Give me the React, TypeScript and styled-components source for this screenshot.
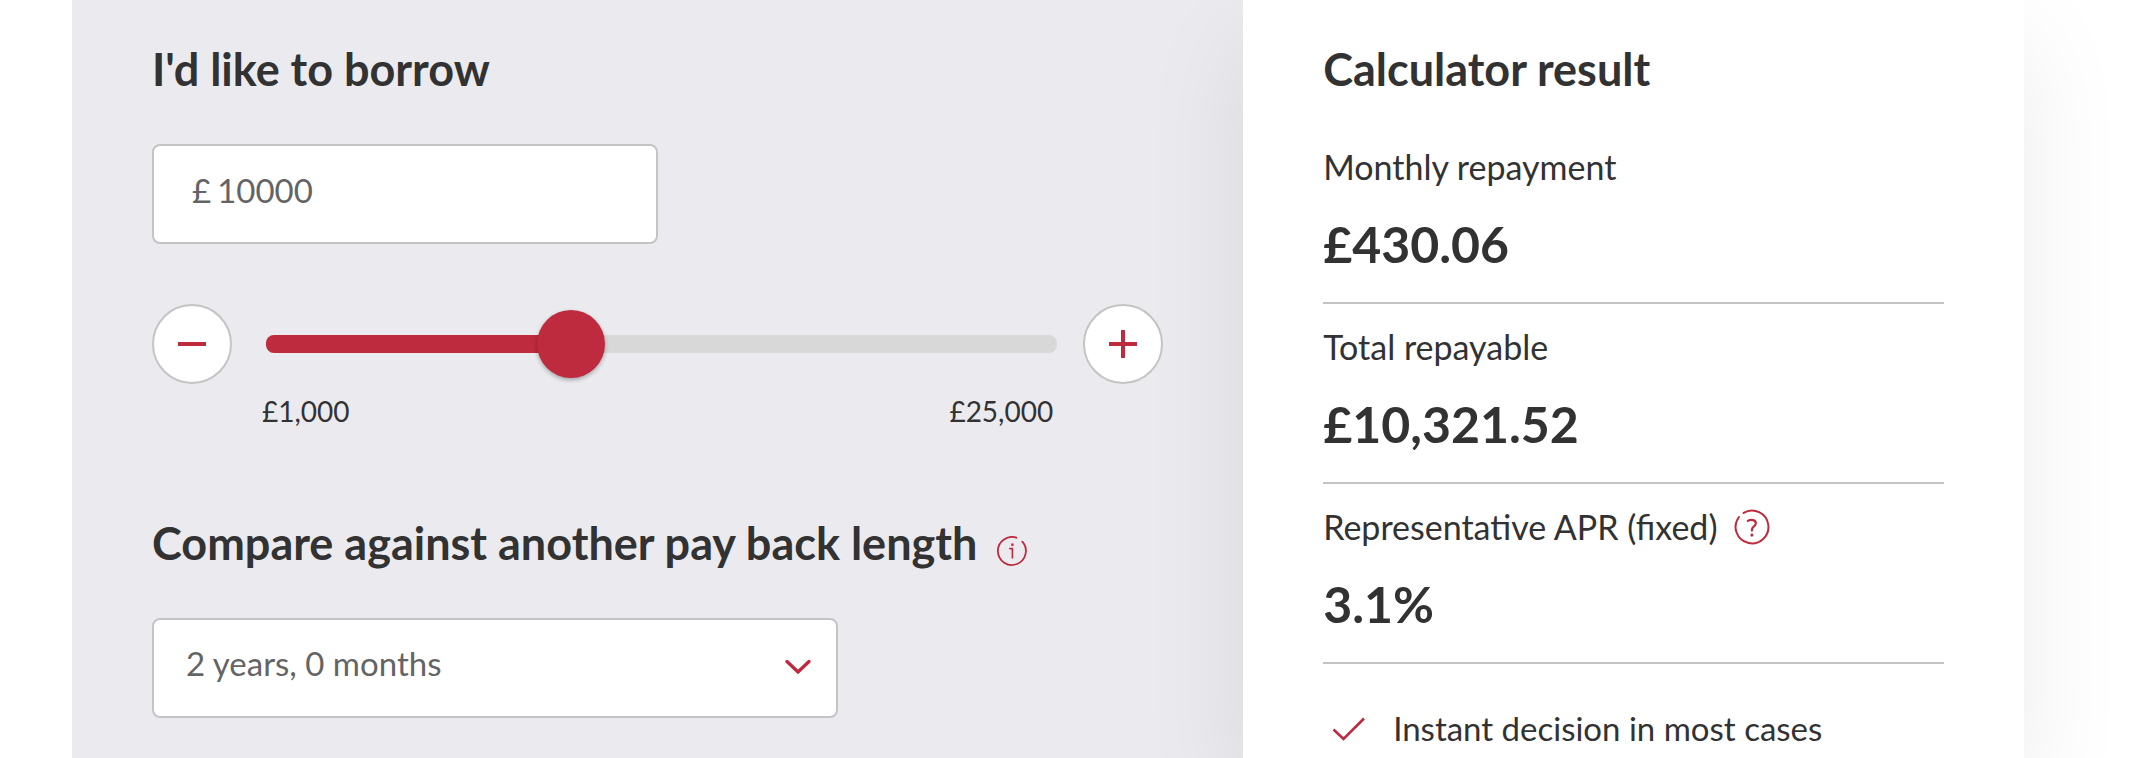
import React, { useState } from 'react';
import styled, { createGlobalStyle, css } from 'styled-components';

const RED = '#be2b3e';
const TEXT = '#323233';
const LINE = '#c4c4c5';

const MIN = 1000;
const MAX = 25000;
const STEP = 500;

const GlobalStyle = createGlobalStyle`
  *, *::before, *::after { box-sizing: border-box; }
  body {
    margin: 0;
    background: #fff;
    color: ${TEXT};
    font-family: Lato, "Liberation Sans", sans-serif;
    overflow-x: hidden;
  }
`;

const Page = styled.main`
  display: grid;
  grid-template-columns: minmax(0, 3fr) minmax(0, 2fr);
  min-height: 100vh;
  padding: 0 124px 0 72px;
  overflow: hidden;
`;

const Form = styled.form`
  padding: 40px 80px;
  background: #ebebef;
`;

const Result = styled.section`
  position: relative;
  padding: 40px 80px 8px;
  background: #fff;
  box-shadow: 0 40px 100px rgba(0, 0, 0, 0.08);
`;

const headingText = css`
  margin: 0;
  font-size: 45px;
  font-weight: 700;
  line-height: 58px;
`;

const Label = styled.label`
  ${headingText}
  display: block;
`;

const Title = styled.h2`
  ${headingText}
`;

const HeadingRow = styled.div`
  display: flex;
  align-items: flex-end;
  gap: 20px;
  margin-top: 84px;
`;

const IconButton = styled.button<{ $size: number; $lift?: number }>`
  display: flex;
  flex: none;
  width: ${(p) => p.$size}px;
  height: ${(p) => p.$size}px;
  margin: 0 0 ${(p) => p.$lift ?? 0}px;
  padding: 0;
  border: 0;
  background: none;
  cursor: pointer;

  svg {
    width: 100%;
    height: 100%;
  }
`;

const fieldBox = css`
  height: 100px;
  border: 2px solid ${LINE};
  border-radius: 8px;
  background: #fff;
`;

const fieldText = css`
  color: #646465;
  font-family: inherit;
  font-size: 33px;
  line-height: 40px;
`;

const AmountBox = styled.div`
  ${fieldBox}
  ${fieldText}
  display: flex;
  align-items: center;
  gap: 6px;
  max-width: 506px;
  margin-top: 46px;
  padding: 0 36px 8px 38px;
`;

const AmountInput = styled.input`
  ${fieldText}
  flex: 1;
  min-width: 0;
  padding: 0;
  border: 0;
  outline: 0;
  background: none;
`;

const SliderRow = styled.div`
  display: grid;
  grid-template-columns: 80px minmax(0, 1fr) 80px;
  align-items: center;
  column-gap: 26px;
  margin-top: 60px;
`;

const RoundButton = styled.button`
  display: flex;
  align-items: center;
  justify-content: center;
  width: 80px;
  height: 80px;
  padding: 0;
  border: 2px solid ${LINE};
  border-radius: 50%;
  background: #fff;
  cursor: pointer;
`;

const Range = styled.input`
  --centre: calc(34px + var(--ratio) * (100% - 68px));
  appearance: none;
  width: calc(100% - 8px);
  height: 68px;
  margin: 0 0 0 8px;
  background: none;
  cursor: pointer;

  &::-webkit-slider-runnable-track {
    height: 18px;
    border-radius: 8px;
    background: linear-gradient(to right, ${RED} var(--centre), #d8d8d9 var(--centre));
  }

  &::-webkit-slider-thumb {
    appearance: none;
    width: 68px;
    height: 68px;
    margin-top: -25px;
    border: 0;
    border-radius: 50%;
    background: ${RED};
    box-shadow: 0 2px 4px rgba(0, 0, 0, 0.3);
  }
`;

const Limits = styled.div`
  display: flex;
  justify-content: space-between;
  margin-top: 8px;
  padding: 0 110px;
  font-size: 28px;
  line-height: 38px;
`;

const SelectBox = styled.div`
  position: relative;
  max-width: 686px;
  margin-top: 46px;

  svg {
    position: absolute;
    top: 41px;
    right: 26px;
    pointer-events: none;
  }
`;

const Select = styled.select`
  ${fieldBox}
  ${fieldText}
  appearance: none;
  display: block;
  width: 100%;
  padding: 0 80px 10px 32px;
  cursor: pointer;
`;

const Figures = styled.dl`
  margin: 26px 0 0;
`;

const Figure = styled.div`
  padding: 23px 0 28px;
  border-bottom: 2px solid ${LINE};
`;

const FigureName = styled.dt`
  display: flex;
  align-items: center;
  gap: 16px;
  height: 40px;
  font-size: 34px;
  line-height: 40px;
`;

const FigureValue = styled.dd`
  margin: 27px 0 0;
  font-size: 50px;
  font-weight: 700;
  line-height: 60px;
`;

const Benefits = styled.ul`
  margin: 44px 0 0;
  padding: 0;
  list-style: none;
`;

const Benefit = styled.li`
  display: flex;
  align-items: center;
  gap: 26px;
  padding-left: 8px;
  font-size: 33px;
  line-height: 40px;
`;

const InfoIcon = () => (
  <svg viewBox="0 0 30 30" fill="none" stroke={RED} strokeWidth="1.8" strokeLinecap="round" aria-hidden="true">
    <path d="M19.4 1.7A14 14 0 1 0 25.3 5.6" />
    <path d="M12.8 12.6H15.4V22" strokeWidth="1.6" />
    <path d="M15.4 8.4v.5" strokeWidth="2.4" />
  </svg>
);

const HelpIcon = () => (
  <svg viewBox="0 0 36 36" fill="none" stroke={RED} strokeWidth="2" strokeLinecap="round" aria-hidden="true">
    <path d="M9.6 3.9A16.4 16.4 0 1 1 5 8" />
    <path d="M13.8 11.9C16.8 10.2 22 10.6 21.8 14.5C21.7 17.2 18.1 17.7 17.9 20.6V21.6" strokeWidth="2.2" />
    <path d="M17.9 26v.3" strokeWidth="2.8" />
  </svg>
);

const results = [
  { name: 'Monthly repayment', value: '£430.06' },
  { name: 'Total repayable', value: '£10,321.52' },
  { name: 'Representative APR (fixed)', value: '3.1%', help: true },
];

export default function App() {
  const [amount, setAmount] = useState(10000);
  const clamped = Math.min(MAX, Math.max(MIN, amount));
  const ratio = (clamped - MIN) / (MAX - MIN);
  const change = (by: number) => setAmount(Math.min(MAX, Math.max(MIN, clamped + by)));

  return (
    <>
      <GlobalStyle />
      <Page>
        <Form onSubmit={(e) => e.preventDefault()}>
          <Label htmlFor="amount">I'd like to borrow</Label>
          <AmountBox>
            <span>£</span>
            <AmountInput
              id="amount"
              type="text"
              inputMode="numeric"
              value={amount}
              onChange={(e) => setAmount(Number(e.target.value.replace(/\D/g, '')))}
            />
          </AmountBox>
          <SliderRow>
            <RoundButton type="button" aria-label="Borrow less" onClick={() => change(-STEP)}>
              <svg width="30" height="30" viewBox="0 0 30 30" stroke={RED} strokeWidth="4" aria-hidden="true">
                <path d="M1 15h28" />
              </svg>
            </RoundButton>
            <Range
              type="range"
              aria-label="Amount to borrow"
              min={MIN}
              max={MAX}
              step={STEP}
              value={clamped}
              style={{ '--ratio': ratio } as React.CSSProperties}
              onChange={(e) => setAmount(Number(e.target.value))}
            />
            <RoundButton type="button" aria-label="Borrow more" onClick={() => change(STEP)}>
              <svg width="30" height="30" viewBox="0 0 30 30" stroke={RED} strokeWidth="4" aria-hidden="true">
                <path d="M1 15h28M15 1v28" />
              </svg>
            </RoundButton>
          </SliderRow>
          <Limits>
            <span>£1,000</span>
            <span>£25,000</span>
          </Limits>

          <HeadingRow>
            <Label htmlFor="length">Compare against another pay back length</Label>
            <IconButton type="button" $size={30} $lift={6} aria-label="About pay back length">
              <InfoIcon />
            </IconButton>
          </HeadingRow>
          <SelectBox>
            <Select id="length" defaultValue="24">
              <option value="12">1 year, 0 months</option>
              <option value="24">2 years, 0 months</option>
              <option value="36">3 years, 0 months</option>
              <option value="48">4 years, 0 months</option>
              <option value="60">5 years, 0 months</option>
            </Select>
            <svg width="28" height="16" viewBox="0 0 28 16" fill="none" stroke={RED} strokeWidth="3.4" strokeLinecap="round" aria-hidden="true">
              <path d="M3 2.5L14 13L25 2.5" />
            </svg>
          </SelectBox>
        </Form>

        <Result>
          <Title>Calculator result</Title>
          <Figures>
            {results.map((r) => (
              <Figure key={r.name}>
                <FigureName>
                  {r.name}
                  {r.help && (
                    <IconButton type="button" $size={36} aria-label="About the representative APR">
                      <HelpIcon />
                    </IconButton>
                  )}
                </FigureName>
                <FigureValue>{r.value}</FigureValue>
              </Figure>
            ))}
          </Figures>
          <Benefits>
            <Benefit>
              <svg width="36" height="26" viewBox="0 0 36 26" fill="none" stroke={RED} strokeWidth="2.6" aria-hidden="true">
                <path d="M2.5 14.5L12.5 24L33 3.5" />
              </svg>
              Instant decision in most cases
            </Benefit>
          </Benefits>
        </Result>
      </Page>
    </>
  );
}
